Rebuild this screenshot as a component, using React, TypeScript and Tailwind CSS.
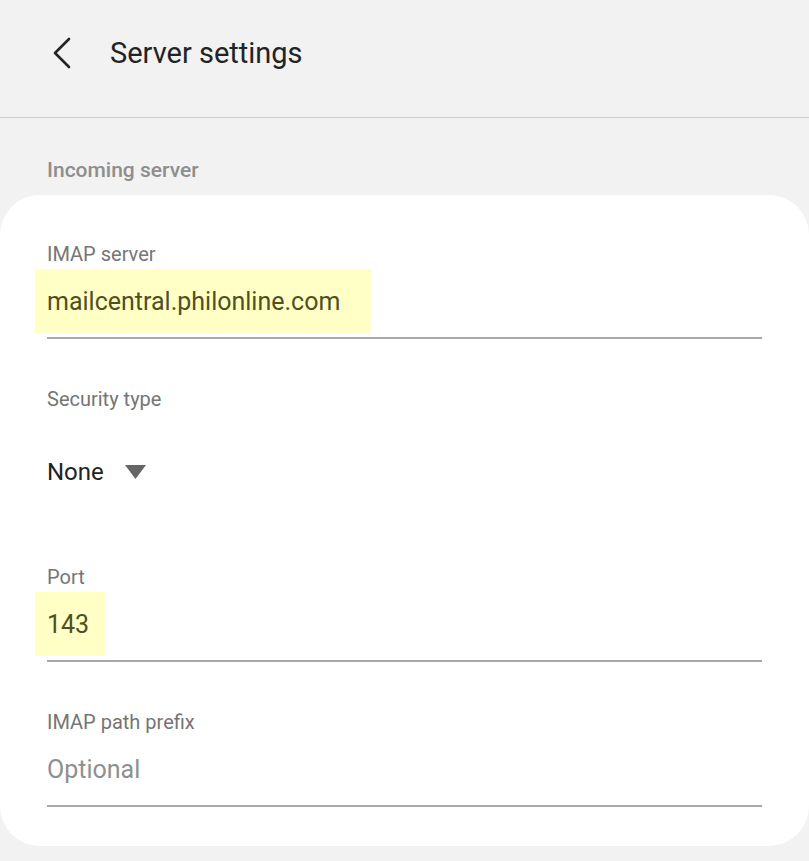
import React from 'react';

const font = { fontFamily: 'Roboto, "Noto Sans", sans-serif' };

function Field({
  label,
  value,
  highlight,
  placeholder,
}: {
  label: string;
  value: string;
  highlight?: string;
  placeholder?: boolean;
}) {
  return (
    <div>
      <div className="text-[20px] leading-[21px] text-[#757575]">{label}</div>
      <div
        className={`-ml-3 mt-1 h-[64px] pl-3 pt-[2px] flex items-center ${highlight ?? ''}`}
      >
        <span
          className={`text-[25px] ${placeholder ? 'text-[#8f8f8f]' : 'text-[#50501e]'}`}
        >
          {value}
        </span>
      </div>
      <div className="mt-[4px] h-[2px] bg-[#a8a8a8]" />
    </div>
  );
}

export default function App() {
  return (
    <div className="min-h-[861px] w-full bg-[#f2f2f2]" style={font}>
      <header className="flex h-[118px] items-center border-b border-[#cfcfcf]">
        <button className="ml-[50px] mt-[-12px] flex h-[34px] w-[24px] items-center justify-center">
          <svg width="22" height="32" viewBox="0 0 22 32" fill="none">
            <polyline
              points="18,2 4,16 18,30"
              stroke="#232323"
              strokeWidth="2.6"
              strokeLinecap="round"
              strokeLinejoin="round"
            />
          </svg>
        </button>
        <h1 className="ml-[36px] mt-[-10px] text-[29px] text-[#232323]">Server settings</h1>
      </header>

      <div className="px-[47px] pt-[40px] pb-[13px] text-[21px] leading-[24px] font-medium text-[#8e8e8e]">
        Incoming server
      </div>

      <div className="mb-[16px] rounded-[40px] bg-white px-[47px] pt-[49px] pb-[39px]">
        <Field label="IMAP server" value="mailcentral.philonline.com" highlight="w-[336px] bg-[#ffffc6]" />

        <div className="mt-[50px]">
          <div className="text-[20px] leading-[21px] text-[#757575]">Security type</div>
          <div className="mt-[44px] flex items-center">
            <span className="text-[24px] text-[#232323]">None</span>
            <svg className="ml-[21px]" width="21" height="15" viewBox="0 0 21 15">
              <polygon points="0,0 21,0 10.5,14" fill="#666666" />
            </svg>
          </div>
        </div>

        <div className="mt-[77px]">
          <Field label="Port" value="143" highlight="w-[70px] bg-[#ffffc6]" />
        </div>

        <div className="mt-[50px]">
          <Field label="IMAP path prefix" value="Optional" placeholder />
        </div>
      </div>
    </div>
  );
}
